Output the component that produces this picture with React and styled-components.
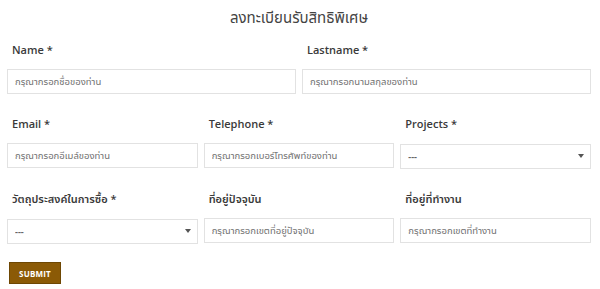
import styled, { createGlobalStyle } from "styled-components";

const GlobalStyle = createGlobalStyle`
  body {
    margin: 0;
    background: #fff;
    font-family: "Open Sans", "Noto Sans Thai", "Noto Sans", sans-serif;
    color: #333;
  }
`;

const fontStack = `"Open Sans", "Noto Sans Thai", "Noto Sans", sans-serif`;

const Page = styled.div`
  width: 600px;
  padding: 7px 9px 0 7px;
  box-sizing: border-box;
`;

const Title = styled.h2`
  margin: 0 0 15px;
  font-size: 15px;
  line-height: 20px;
  font-weight: 400;
  color: #444;
  text-align: center;
`;

const Row = styled.div`
  display: grid;
  grid-template-columns: repeat(${(p) => p.cols}, 1fr);
  gap: 6px;
  margin-bottom: 22px;
`;

const Field = styled.div`
  display: flex;
  flex-direction: column;
`;

const Label = styled.label`
  font-size: 11px;
  line-height: 16px;
  font-weight: 600;
  color: #3a3a3a;
  padding-left: 5px;
  margin-bottom: 11px;
`;

const Input = styled.input`
  height: 25px;
  box-sizing: border-box;
  border: 1px solid #e2e2e2;
  border-radius: 0;
  padding: 0 7px;
  font-family: ${fontStack};
  font-size: 9.5px;
  color: #555;
  outline: none;
  &::placeholder {
    color: #707070;
  }
`;

const SelectWrap = styled.div`
  position: relative;
  &::after {
    content: "";
    position: absolute;
    right: 7px;
    top: 11px;
    border-left: 3.5px solid transparent;
    border-right: 3.5px solid transparent;
    border-top: 4px solid #555;
    pointer-events: none;
  }
`;

const Select = styled.select`
  width: 100%;
  height: 25px;
  box-sizing: border-box;
  appearance: none;
  border: 1px solid #e2e2e2;
  border-radius: 0;
  background: #fff;
  padding: 0 7px;
  font-family: ${fontStack};
  font-size: 9px;
  font-weight: 700;
  color: #666;
  outline: none;
`;

const Submit = styled.button`
  display: block;
  margin: -4px 0 0 2px;
  width: 52px;
  height: 22px;
  padding: 0;
  background: #8b5a06;
  border: 1px solid #6e4703;
  color: #fff;
  font-family: ${fontStack};
  font-size: 8px;
  font-weight: 700;
  letter-spacing: 0.2px;
  cursor: pointer;
`;

const SelectField = ({ label }) => (
  <Field>
    <Label>{label}</Label>
    <SelectWrap>
      <Select defaultValue="">
        <option value="">---</option>
      </Select>
    </SelectWrap>
  </Field>
);

const TextField = ({ label, placeholder }) => (
  <Field>
    <Label>{label}</Label>
    <Input placeholder={placeholder} />
  </Field>
);

export default function App() {
  return (
    <>
      <GlobalStyle />
      <Page>
        <Title>ลงทะเบียนรับสิทธิพิเศษ</Title>
        <Row cols={2}>
          <TextField label="Name *" placeholder="กรุณากรอกชื่อของท่าน" />
          <TextField label="Lastname *" placeholder="กรุณากรอกนามสกุลของท่าน" />
        </Row>
        <Row cols={3}>
          <TextField label="Email *" placeholder="กรุณากรอกอีเมล์ของท่าน" />
          <TextField label="Telephone *" placeholder="กรุณากรอกเบอร์โทรศัพท์ของท่าน" />
          <SelectField label="Projects *" />
        </Row>
        <Row cols={3}>
          <SelectField label="วัตถุประสงค์ในการซื้อ *" />
          <TextField label="ที่อยู่ปัจจุบัน" placeholder="กรุณากรอกเขตที่อยู่ปัจจุบัน" />
          <TextField label="ที่อยู่ที่ทำงาน" placeholder="กรุณากรอกเขตที่ทำงาน" />
        </Row>
        <Submit>SUBMIT</Submit>
      </Page>
    </>
  );
}
